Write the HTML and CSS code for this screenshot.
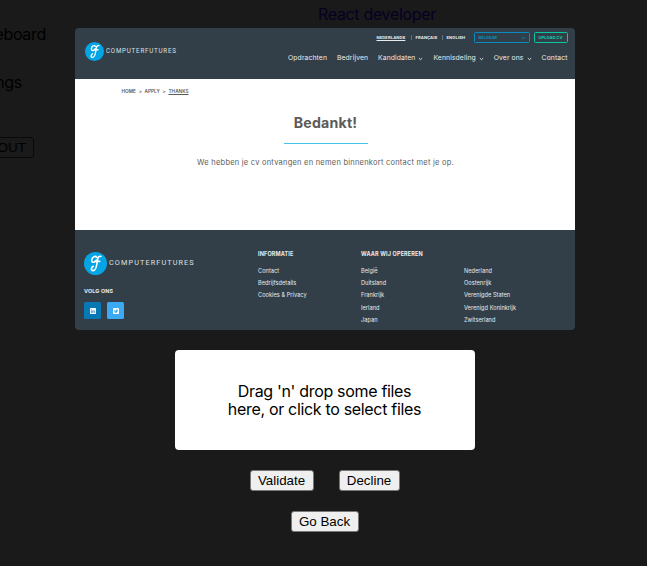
FILE: index.html
```html
<!DOCTYPE html>
<html lang="nl">
<head>
<meta charset="utf-8">
<title>React developer</title>
<link rel="stylesheet" href="styles.css">
</head>
<body>
<svg class="defs" width="0" height="0" aria-hidden="true">
  <symbol id="logo" viewBox="0 0 24 24">
    <circle cx="12" cy="12" r="12" fill="#05a5e5"/>
    <path d="M13.2 5.6C12 3.4 8.4 5 8.1 8.4c-.2 3 3 3.2 4.6.2M17.6 4.6c-3.4-1-3.5 3.5-4.1 7.4-.6 4.2-1.5 7.5-4 7.5-2.6 0-2.2-3.2.1-4.6M11.8 9.8h4.6" fill="none" stroke="#fff" stroke-width="1.7" stroke-linecap="round"/>
  </symbol>
  <symbol id="chevron" viewBox="0 0 6 4"><path d="M1 1l2 1.8L5 1" fill="none" stroke="currentColor" stroke-width="1.1"/></symbol>
</svg>
<div class="page">
  <aside class="sidebar">
    <span class="side-item first">eboard</span>
    <span class="side-item second">ngs</span>
    <button class="logout">OUT</button>
  </aside>
  <a class="job-title">React developer</a>
</div>
<main class="modal">
  <section class="shot">
    <header class="site-header">
      <div class="brand"><svg class="mark"><use href="#logo"/></svg><span class="brand-name">COMPUTERFUTURES</span></div>
      <div class="header-right">
        <div class="tools">
          <span class="lang current">NEDERLANDS</span><i class="sep"></i>
          <span class="lang french">FRANÇAIS</span><i class="sep"></i>
          <span class="lang english">ENGLISH</span>
          <span class="country">BELGIUM<svg class="chev"><use href="#chevron"/></svg></span>
          <span class="upload">UPLOAD CV</span>
        </div>
        <nav class="nav">
          <span>Opdrachten</span><span>Bedrijven</span>
          <span>Kandidaten<svg class="chev"><use href="#chevron"/></svg></span>
          <span>Kennisdeling<svg class="chev"><use href="#chevron"/></svg></span>
          <span>Over ons<svg class="chev"><use href="#chevron"/></svg></span>
          <span>Contact</span>
        </nav>
      </div>
    </header>
    <div class="content">
      <div class="crumbs"><span>HOME</span><span>&gt;</span><span>APPLY</span><span>&gt;</span><u>THANKS</u></div>
      <h1>Bedankt!</h1>
      <div class="rule"></div>
      <p class="thanks">We hebben je cv ontvangen en nemen binnenkort contact met je op.</p>
    </div>
    <footer class="site-footer">
      <div class="about">
        <div class="brand large"><svg class="mark"><use href="#logo"/></svg><span class="brand-name">COMPUTERFUTURES</span></div>
        <b class="follow">VOLG ONS</b>
        <div class="social">
          <span class="tile linkedin"><svg viewBox="0 0 6 6"><rect width="6" height="6" rx=".7" fill="#fff"/><path d="M1.4 2.5v2.4M1.4 1v.7M2.8 5V2.5M2.8 3.4c.4-1.1 1.9-1 1.9.2V5" fill="none" stroke="#0878b4" stroke-width=".7"/></svg></span>
          <span class="tile twitter"><svg viewBox="0 0 6 6"><rect width="6" height="6" rx=".7" fill="#fff"/><path d="M1.1 1.7c.6.8 1.2 1 1.9 1 0-1.4 1.1-1.5 1.6-.9l.5-.1-.4.7C4.6 4.7 2.4 5.2 1 4.3c.5 0 .8-.1 1.1-.3-.7-.2-1-.6-1-1z" fill="#3ba9f4"/></svg></span>
        </div>
      </div>
      <div class="links info"><b>INFORMATIE</b><span>Contact</span><span>Bedrijfsdetails</span><span>Cookies &amp; Privacy</span></div>
      <div class="links where"><b>WAAR WIJ OPEREREN</b><span>België</span><span>Duitsland</span><span>Frankrijk</span><span>Ierland</span><span>Japan</span></div>
      <div class="links more"><span>Nederland</span><span>Oostenrijk</span><span>Verenigde Staten</span><span>Verenigd Koninkrijk</span><span>Zwitserland</span></div>
    </footer>
  </section>
  <div class="dropzone"><p>Drag 'n' drop some files<br>here, or click to select files</p></div>
  <div class="actions"><button class="validate">Validate</button><button class="decline">Decline</button></div>
  <button class="back">Go Back</button>
</main>
</body>
</html>
```
FILE: styles.css
```css
* { box-sizing: border-box; }
body { margin: 0; width: 647px; height: 566px; overflow: hidden; background: #1a1a1a; color: #000; font-family: Inter, sans-serif; position: relative; }
.defs { position: absolute; }
.page { position: absolute; inset: 0; display: flex; font-size: 16px; line-height: 20px; }
.sidebar { width: 46px; padding-top: 24px; display: flex; flex-direction: column; align-items: flex-end; flex: none; }
.side-item { white-space: nowrap; letter-spacing: -0.3px; }
.side-item.first { margin-bottom: 28px; }
.side-item.second { margin-right: 24px; }
.logout { margin: 45px 12px 0 0; width: 44px; height: 21px; flex: none; padding: 0 7px 0 0; text-align: right; background: #1a1a1a; border: 1px solid #090909; border-radius: 3px; font: 13.5px/18px "Liberation Sans", sans-serif; color: #000; }
.job-title { margin: 4px 0 0 272px; color: #070022; white-space: nowrap; letter-spacing: -0.33px; }
.modal { position: relative; width: 649px; padding-top: 28px; display: flex; flex-direction: column; align-items: center; }
.shot { width: 500px; height: 302px; border-radius: 4px; overflow: hidden; background: #333f48; color: #e8ebed; }
.site-header { height: 51px; display: flex; justify-content: space-between; padding: 0 7px 0 10px; }
.brand { display: flex; align-items: center; height: 20px; margin-top: 13px; }
.mark { width: 19px; height: 19px; flex: none; }
.brand-name { font: 6.8px/10px "Roboto", sans-serif; letter-spacing: .88px; margin-left: 2px; white-space: nowrap; color: #dce0e2; transform: scaleX(.91); transform-origin: left; }
.header-right { display: flex; flex-direction: column; align-items: flex-end; }
.tools { display: flex; align-items: center; height: 11px; margin-top: 4px; font-size: 4.1px; line-height: 6px; font-weight: 700; white-space: nowrap; }
.current { text-decoration: underline; width: 30px; letter-spacing: .1px; }
.french { width: 22px; letter-spacing: .08px; }
.english { width: 19px; letter-spacing: .1px; }
.sep { width: 1px; height: 5px; background: #63707a; margin: 0 4px; }
.country { display: flex; align-items: center; justify-content: space-between; width: 56px; height: 11px; margin: 0 4px 0 8px; padding: 0 3px 0 4px; border: 1px solid #078bc2; border-radius: 1.5px; color: #078bc2; }
.upload { width: 34px; height: 11px; line-height: 9px; text-align: center; border: 1px solid #07c8a3; border-radius: 1.5px; color: #07d6ad; }
.chev { width: 5px; height: 4px; flex: none; }
.nav { display: flex; gap: 10px; margin-top: 10px; font-size: 6.8px; line-height: 10px; white-space: nowrap; letter-spacing: .1px; }
.nav span { display: flex; align-items: center; }
.nav .chev { margin: 1px 0 0 3px; }
.content { height: 151px; background: #fff; color: #5b5b5b; display: flex; flex-direction: column; align-items: center; }
.crumbs { align-self: flex-start; margin: 9px 0 0 47px; display: flex; gap: 2.7px; font-size: 4.75px; line-height: 6px; font-weight: 600; white-space: nowrap; }
h1 { margin: 19px 0 0 2px; font-size: 14.2px; line-height: 20px; font-weight: 700; letter-spacing: .2px; }
.rule { width: 84px; height: 1px; margin: 10px 0 0 2px; background: #44c4e8; flex: none; }
.thanks { margin: 14px 0 0 2px; font-size: 7.5px; line-height: 10px; letter-spacing: .23px; white-space: nowrap; }
.site-footer { height: 100px; padding-left: 9.5px; display: grid; grid-template-columns: 174px 103px 103px 1fr; }
.brand.large { height: 24px; margin-top: 21px; }
.large .mark { width: 23px; height: 23px; }
.large .brand-name { font-size: 8px; letter-spacing: 1.22px; }
.follow { display: block; margin-top: 13px; font-size: 5.4px; line-height: 7px; letter-spacing: .15px; }
.social { display: flex; gap: 6px; margin-top: 7px; }
.tile { width: 17px; height: 17px; border-radius: 1.5px; display: flex; align-items: center; justify-content: center; }
.tile svg { width: 6px; height: 6px; }
.linkedin { background: #0878b4; }
.twitter { background: #3ba9f4; }
.links { padding-top: 20px; display: flex; flex-direction: column; font-size: 5.6px; line-height: 8px; gap: 4.2px; letter-spacing: .05px; white-space: nowrap; }
.links b { font-size: 5.5px; margin-bottom: 4.8px; letter-spacing: .14px; }
.more { padding-top: 37px; }
.dropzone { width: 300px; height: 100px; margin-top: 20px; background: #fff; border-radius: 4px; display: flex; align-items: center; justify-content: center; text-align: center; }
.dropzone p { margin: 0; font-size: 16px; line-height: 18px; letter-spacing: -0.32px; white-space: nowrap; }
.actions { display: flex; gap: 25px; margin-top: 20px; }
.actions button, .back { height: 21px; padding: 0; border: 1px solid #777; border-radius: 3px; background: #efefef; color: #000; font: 13.33px/18px "Liberation Sans", sans-serif; }
.validate { width: 64px; }
.decline { width: 61px; }
.back { width: 68px; margin-top: 20px; }
```
